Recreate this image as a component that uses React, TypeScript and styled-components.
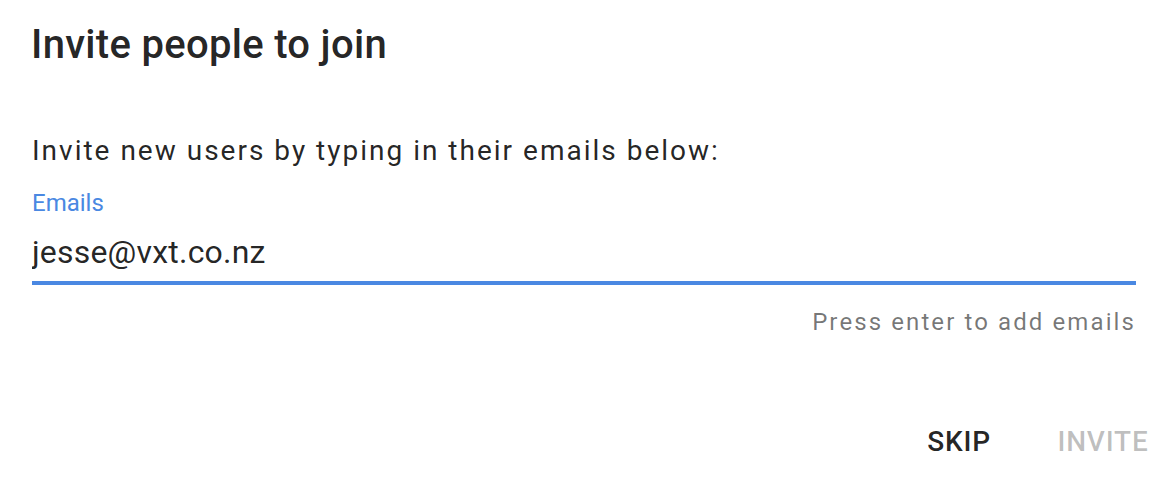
import React from "react";
import styled, { createGlobalStyle } from "styled-components";

const Global = createGlobalStyle`
  html, body { margin: 0; padding: 0; background: #ffffff; }
  body { font-family: Roboto, "Noto Sans", "Liberation Sans", sans-serif; -webkit-font-smoothing: antialiased; }
  * { box-sizing: border-box; }
`;

const Dialog = styled.div`
  width: 1170px;
  height: 486px;
  display: flex;
  flex-direction: column;
  background: #fff;
  overflow: hidden;
`;

const Title = styled.h2`
  margin: 0;
  padding: 21px 34px 0 31px;
  font-size: 40px;
  line-height: 48px;
  font-weight: 500;
  letter-spacing: 0.3px;
  color: rgba(0, 0, 0, 0.87);
`;

const Content = styled.div`
  display: flex;
  flex-direction: column;
  padding: 62px 34px 0 32px;
`;

const Lead = styled.p`
  margin: 0;
  font-size: 28px;
  line-height: 40px;
  letter-spacing: 2px;
  color: rgba(0, 0, 0, 0.87);
`;

const Field = styled.div`
  display: flex;
  flex-direction: column;
  margin-top: 16px;
`;

const Label = styled.label`
  font-size: 24px;
  line-height: 32px;
  color: #4a88e2;
`;

const Input = styled.input`
  margin-top: 13px;
  border: none;
  border-bottom: 4px solid #4a88e2;
  outline: none;
  padding: 0 0 9px 0;
  font-family: inherit;
  font-size: 32px;
  line-height: 40px;
  height: 53px;
  letter-spacing: 0.2px;
  color: rgba(0, 0, 0, 0.87);
  background: transparent;
`;

const Helper = styled.p`
  margin: 21px 0 0 0;
  text-align: right;
  font-size: 24px;
  line-height: 32px;
  letter-spacing: 2.1px;
  color: rgba(0, 0, 0, 0.54);
`;

const Actions = styled.div`
  display: flex;
  justify-content: flex-end;
  gap: 16px;
  padding: 74px 3px 0 0;
`;

const Button = styled.button<{ $disabled?: boolean }>`
  min-width: 128px;
  padding: 12px 16px;
  border: none;
  background: transparent;
  font-family: inherit;
  font-size: 28px;
  line-height: 36px;
  font-weight: 500;
  letter-spacing: 0.8px;
  text-transform: uppercase;
  color: ${(p) => (p.$disabled ? "rgba(0, 0, 0, 0.26)" : "rgba(0, 0, 0, 0.87)")};
  cursor: ${(p) => (p.$disabled ? "default" : "pointer")};
`;

export default function App() {
  return (
    <>
      <Global />
      <Dialog>
        <Title>Invite people to join</Title>
        <Content>
          <Lead>Invite new users by typing in their emails below:</Lead>
          <Field>
            <Label htmlFor="emails">Emails</Label>
            <Input id="emails" defaultValue="jesse@vxt.co.nz" />
          </Field>
          <Helper>Press enter to add emails</Helper>
        </Content>
        <Actions>
          <Button>Skip</Button>
          <Button $disabled disabled>
            Invite
          </Button>
        </Actions>
      </Dialog>
    </>
  );
}
